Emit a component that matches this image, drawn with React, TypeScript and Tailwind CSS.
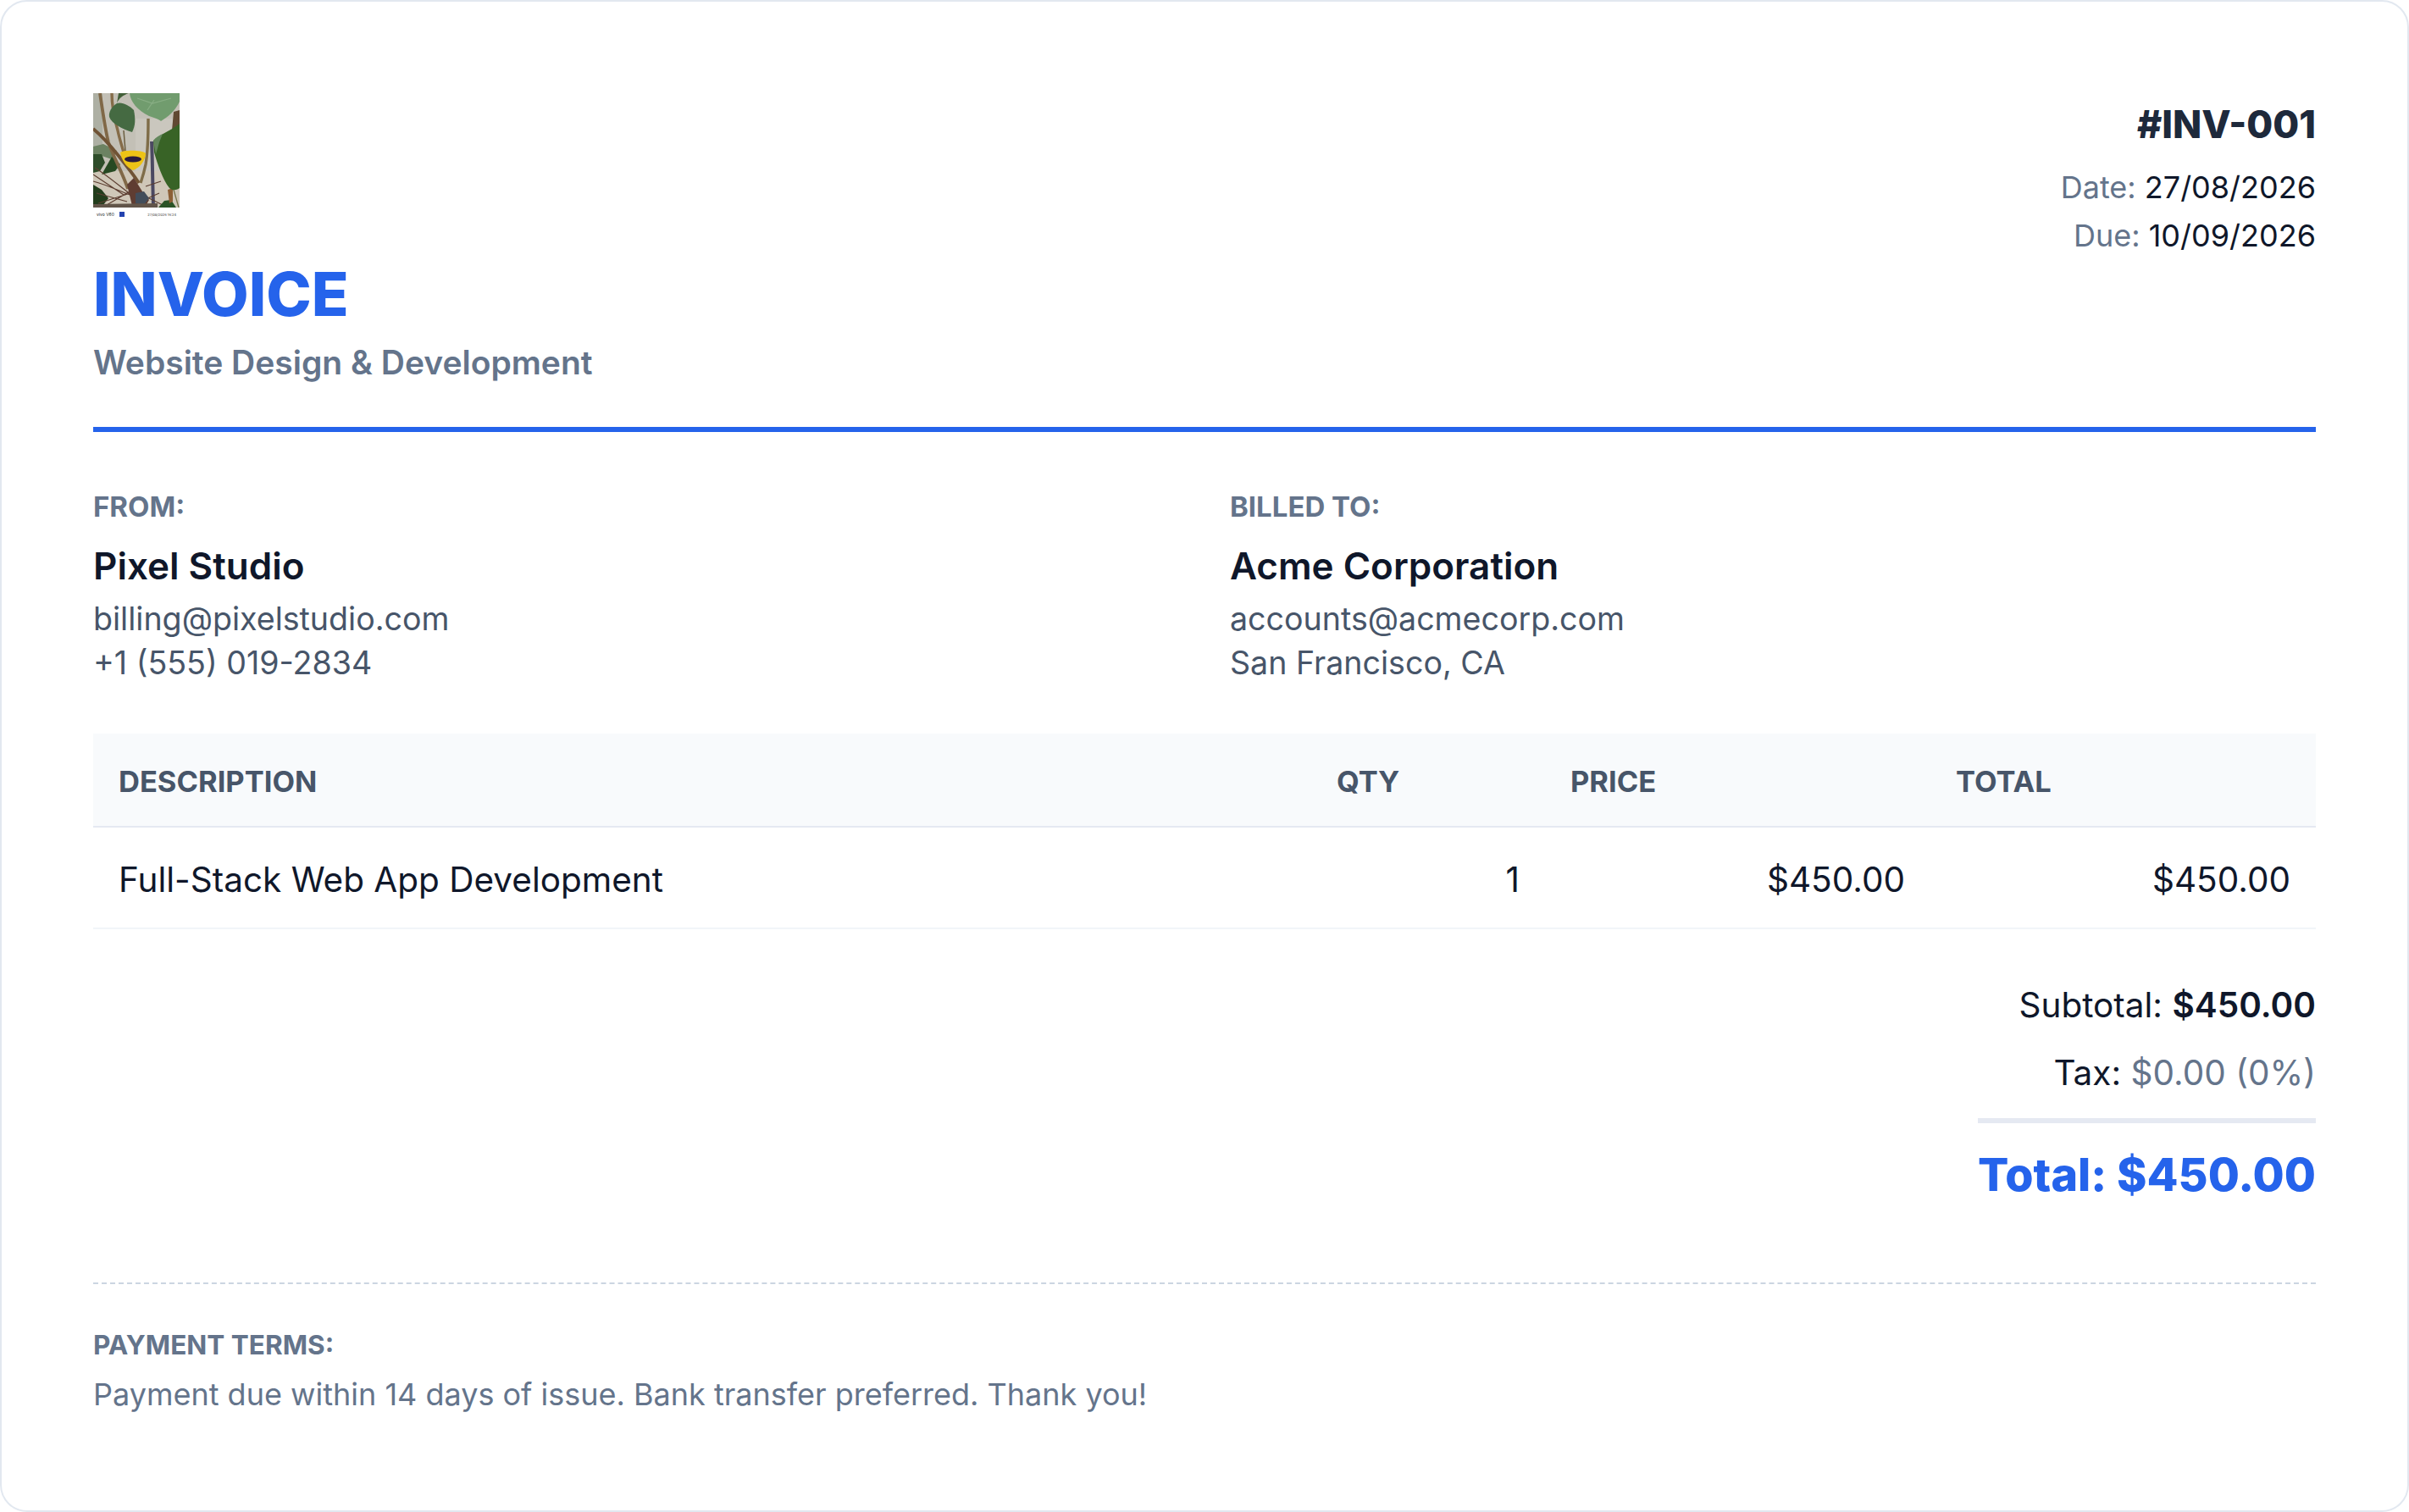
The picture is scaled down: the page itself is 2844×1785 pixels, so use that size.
function PlantPhoto() {
  return (
    <svg viewBox="0 0 102 146" width="102" height="146" className="block">
      <defs>
        <filter id="soft" x="-5%" y="-5%" width="110%" height="110%">
          <feGaussianBlur stdDeviation="0.6" />
        </filter>
        <clipPath id="photo">
          <rect width="102" height="135" />
        </clipPath>
      </defs>
      <g clipPath="url(#photo)">
        <g filter="url(#soft)">
          <rect x="-3" y="-3" width="108" height="141" fill="#c3c0b6" />
          <rect x="-3" y="-3" width="14" height="70" fill="#aeb0a4" />
          <rect x="50" y="30" width="55" height="70" fill="#cac7be" />
          <rect x="-3" y="92" width="108" height="46" fill="#cfc7b8" />
          <path d="M0 63 L12 60 L28 68 L22 78 L10 74 L0 72 Z" fill="#6c8262" />
          <path d="M0 72 L10 72 L14 82 L8 92 L0 94 Z" fill="#2f4e29" />
          <path d="M10 96 L22 75 L32 84 L26 92 Z" fill="#284a23" />
          <path d="M0 108 L10 114 L18 124 L12 132 L0 132 Z" fill="#243d1f" />
          <path d="M8 0 C11 20 14 42 18 58 C24 76 34 92 41 113" stroke="#806746" strokeWidth="3.8" fill="none" />
          <path d="M22 0 C22 14 25 30 29 44 C31 54 34 62 36 70" stroke="#856c48" strokeWidth="3.4" fill="none" />
          <path d="M36 44 L38 68" stroke="#6c5e42" strokeWidth="1.5" fill="none" />
          <path d="M0 42 C12 52 22 64 30 74 C38 84 46 94 54 106" stroke="#705234" strokeWidth="3.8" fill="none" />
          <path d="M65 30 C65 52 64 72 62 84 C60 94 58 100 56 106" stroke="#7f6d48" strokeWidth="3.4" fill="none" />
          <path d="M69 57 C70 76 70 100 71 133" stroke="#4c4a62" strokeWidth="4" fill="none" />
          <path d="M2 88 C18 98 34 112 50 124 M0 104 C16 108 32 116 48 122 M6 130 L44 118 M58 120 L86 134 M62 110 L80 104 M4 118 L40 128 M0 96 L36 120 M16 132 L50 112 M60 126 L78 118" stroke="#5c3e30" strokeWidth="1.2" fill="none" />
          <path d="M40 108 L48 100 L58 116 L66 126 L62 133 L46 133 Z" fill="#5f3d32" />
          <path d="M50 118 L60 116 L66 124 L60 132 L50 130 Z" fill="#434d5a" />
          <path d="M0 131 L76 130 L76 135 L0 135 Z" fill="#625448" />
          <path d="M77 135 L84 127 L92 126 L98 135 Z" fill="#2b5325" />
          <path d="M95 22 L102 20 L102 42 L93 44 Z" fill="#614a32" />
          <path d="M88 114 L94 112 L94 128 L90 130 Z" fill="#8c5f36" />
          <path d="M95 114 L101 135" stroke="#75724a" strokeWidth="1.3" fill="none" />
          <path d="M43 0 C44 10 52 20 66 27 C72 29 78 31 80 33 C88 28 96 22 102 10 L102 0 Z" fill="#719c6e" />
          <path d="M52 6 L70 12 L92 6 M64 20 L72 8" stroke="#88ae84" strokeWidth="1.2" fill="none" />
          <path d="M28 12 C22 16 18 22 19 28 C22 36 34 42 46 46 C50 38 50 30 48 20 C42 14 34 10 28 12 Z" fill="#446a42" />
          <path d="M28 12 C30 6 36 2 42 0 L30 0 Z" fill="#425f38" />
          <path d="M71 56 C80 48 92 44 102 36 L102 112 C100 114 94 116 90 112 C82 102 76 84 72 70 Z" fill="#386328" />
          <path d="M71 56 C74 52 78 50 82 48 L78 58 L74 72 Z" fill="#64875c" />
          <path d="M32 70 C36 67 58 67 62 71 C62 78 56 88 47 91 C39 88 33 78 32 70 Z" fill="#edc313" />
          <ellipse cx="47" cy="78" rx="10" ry="3.4" fill="#2b1a3c" />
        </g>
      </g>
      <text x="4" y="144.5" fontSize="5" fill="#222" fontFamily="Inter, sans-serif">vivo V60</text>
      <rect x="31" y="140" width="6" height="6" fill="#2443b0" />
      <text x="98" y="144.5" textAnchor="end" fontSize="4" fill="#333" fontFamily="Inter, sans-serif">27/08/2026 16:24</text>
    </svg>
  );
}

export default function App() {
  return (
    <div className="min-h-[1785px] bg-white font-['Inter',sans-serif] text-[#0f172a]">
      <div className="h-[1785px] rounded-[32px] border-2 border-[#e2e8f0] bg-white px-[108px] pt-[108px]">
        {/* header */}
        <div className="flex justify-between border-b-[6px] border-[#2563eb] pb-[46px]">
          <div>
            <PlantPhoto />
            <h1 className="mt-[51px] text-[72px] leading-[80px] font-extrabold text-[#2563eb]">INVOICE</h1>
            <p className="mt-[11px] text-[39px] leading-[60px] font-semibold text-[#64748b]">Website Design &amp; Development</p>
          </div>
          <div className="pt-[9px] text-right">
            <div className="text-[44.8px] leading-[56px] font-extrabold text-[#1e293b]">#INV-001</div>
            <div className="mt-[18px] text-[36px] leading-[57px] text-[#64748b]">Date: <span className="text-[#0f172a]">27/08/2026</span></div>
            <div className="text-[36px] leading-[57px] text-[#64748b]">Due: <span className="text-[#0f172a]">10/09/2026</span></div>
          </div>
        </div>

        {/* parties */}
        <div className="mt-[64px] grid grid-cols-2 gap-[60px]">
          <Party label="FROM:" name="Pixel Studio" line1="billing@pixelstudio.com" line2="+1 (555) 019-2834" />
          <Party label="BILLED TO:" name="Acme Corporation" line1="accounts@acmecorp.com" line2="San Francisco, CA" />
        </div>

        {/* table */}
        <table className="mt-[57px] w-full table-fixed border-collapse text-[40.5px]">
          <thead>
            <tr className="h-[110px] border-b-2 border-[#e5e9f2] bg-[#f8fafc] text-left text-[34.5px] text-[#475569]">
              <th className="w-[1438px] px-[30px] pt-[5px] font-bold">DESCRIPTION</th>
              <th className="w-[276px] px-[30px] pt-[5px] font-bold">QTY</th>
              <th className="w-[455px] px-[30px] pt-[5px] font-bold">PRICE</th>
              <th className="px-[30px] pt-[5px] font-bold">TOTAL</th>
            </tr>
          </thead>
          <tbody>
            <tr className="h-[120px] border-b-2 border-[#f1f5f9]">
              <td className="px-[30px] pt-[6px]">Full-Stack Web App Development</td>
              <td className="px-[30px] pt-[6px] text-right">1</td>
              <td className="px-[30px] pt-[6px] text-right">$450.00</td>
              <td className="px-[30px] pt-[6px] text-right">$450.00</td>
            </tr>
          </tbody>
        </table>

        {/* totals */}
        <div className="mt-[60px] flex flex-col items-end">
          <div className="text-[40.5px] leading-[60px]">Subtotal: <span className="font-semibold">$450.00</span></div>
          <div className="mt-[20px] text-[40.5px] leading-[60px]">Tax: <span className="text-[#64748b]">$0.00 (0%)</span></div>
          <div className="mt-[23px] border-t-[6px] border-[#e5e9f2] pt-[21px] text-[53.8px] leading-[80px] font-extrabold text-[#2563eb]">Total: $450.00</div>
        </div>

        {/* terms */}
        <div className="mt-[87px] border-t-2 border-dashed border-[#cbd5e1] pt-[48px]">
          <div className="text-[31.5px] leading-[48px] font-bold text-[#64748b]">PAYMENT TERMS:</div>
          <div className="mt-[6px] text-[36px] leading-[56px] text-[#64748b]">Payment due within 14 days of issue. Bank transfer preferred. Thank you!</div>
        </div>
      </div>
    </div>
  );
}

function Party({ label, name, line1, line2 }: { label: string; name: string; line1: string; line2: string }) {
  return (
    <div>
      <div className="text-[33px] leading-[48px] font-bold text-[#64748b]">{label}</div>
      <div className="mt-[14px] text-[44px] leading-[64px] font-semibold">{name}</div>
      <div className="mt-[5px] text-[37.6px] leading-[52px] text-[#475569]">{line1}</div>
      <div className="text-[37.6px] leading-[52px] text-[#475569]">{line2}</div>
    </div>
  );
}
